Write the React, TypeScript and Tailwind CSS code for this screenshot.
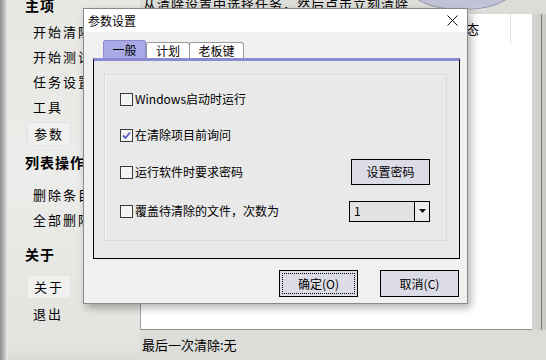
import React from 'react';

const sideItems: { label: string; head?: boolean; mt: number; box?: boolean }[] = [
  { label: '主项', head: true, mt: 0 },
  { label: '开始清除', mt: 2 },
  { label: '开始测试', mt: 0 },
  { label: '任务设置', mt: 0 },
  { label: '工具', mt: 0 },
  { label: '参数', mt: 2, box: true },
  { label: '列表操作', head: true, mt: 4 },
  { label: '删除条目', mt: 8 },
  { label: '全部删除', mt: 0 },
  { label: '关于', head: true, mt: 10 },
  { label: '关于', mt: 8, box: true },
  { label: '退出', mt: 2 },
];

function Check({ checked }: { checked?: boolean }) {
  return (
    <span className="w-[13px] h-[13px] border border-[#3a3a3a] bg-[#f4f4f4] flex items-center justify-center shrink-0">
      {checked && (
        <svg width="9" height="9" viewBox="0 0 9 9">
          <path d="M1 4.5 L3.5 7 L8 1.5" fill="none" stroke="#5a5ac8" strokeWidth="1.8" />
        </svg>
      )}
    </span>
  );
}

function Btn({ label, focus }: { label: string; focus?: boolean }) {
  return (
    <div className="w-[79px] h-[27px] border border-black bg-[#dcdce6] p-[2px]">
      <div
        className={`w-full h-full flex items-center justify-center text-[12px] ${
          focus ? 'border border-dotted border-black' : ''
        }`}
      >
        {label}
      </div>
    </div>
  );
}

export default function App() {
  return (
    <div className="relative w-[546px] h-[360px] overflow-hidden flex bg-[#dcdcd8] text-black font-['Noto_Sans_CJK_SC',sans-serif]">
      {/* left frame strip */}
      <div className="w-[8px] h-full bg-gradient-to-r from-[#8e8e8e] via-[#b8b8b8] to-[#f2f2f2]" />

      {/* sidebar */}
      <div className="w-[132px] h-full bg-gradient-to-b from-[#e6e6e2] via-[#ececea] to-[#e2e2de] flex flex-col mt-[-7px]">
        {sideItems.map((it, i) =>
          it.head ? (
            <div
              key={i}
              className="h-[24px] flex items-center pl-[17px] text-[14px] font-bold tracking-[1px]"
              style={{ marginTop: it.mt }}
            >
              {it.label}
            </div>
          ) : (
            <div key={i} className="h-[25px] flex items-center pl-[19px]" style={{ marginTop: it.mt }}>
              <span
                className={`h-[24px] flex items-center px-[6px] text-[13px] tracking-[2px] ${
                  it.box ? 'bg-[#f0f0ee] border border-[#e4e4e2]' : ''
                }`}
              >
                {it.label}
              </span>
            </div>
          )
        )}
      </div>

      {/* main area */}
      <div className="flex-1 h-full flex flex-col">
        <div className="h-[14px] flex items-end pl-[3px] overflow-hidden">
          <span className="text-[13px] tracking-[1px] leading-[14px] mb-[3px] whitespace-nowrap">
            从清除设置中选择任务，然后点击立刻清除
          </span>
        </div>
        <div className="flex h-[316px]">
          <div className="w-[392px] h-full bg-white border-l border-[#a0a0a0] border-b border-b-[#909090]">
            <div className="h-[30px] flex">
              <div className="w-[370px] flex items-center pl-[312px] text-[13px] border-r border-[#e4e4e4]">
                状态
              </div>
            </div>
          </div>
          <div className="flex-1 h-full bg-gradient-to-r from-[#d6d6d2] to-[#c8c8c4] flex">
            <div className="w-[9px]" />
            <div className="w-[1px] h-full bg-[#7c7c7c]" />
          </div>
        </div>
        <div className="flex-1 flex items-center pl-[2px] text-[13px]">最后一次清除:无</div>
      </div>

      {/* decorative ellipse top right */}
      <div className="absolute left-[412px] top-[-28px] w-[100px] h-[38px] rounded-[50%] bg-gradient-to-b from-[#a8a8c4] to-[#c8c8dc] border border-[#9090a8]" />

      {/* dialog */}
      <div className="absolute left-[83px] top-[8px] w-[385px] h-[296px] border border-[#8a8a8a] bg-[#f0f0f0] shadow-[3px_4px_8px_rgba(0,0,0,0.3)] flex flex-col">
        <div className="h-[23px] bg-white flex items-center justify-between pl-[4px] pr-[9px] text-[12px]">
          <span>参数设置</span>
          <svg width="11" height="11" viewBox="0 0 11 11">
            <path d="M0.5 0.5 L10.5 10.5 M10.5 0.5 L0.5 10.5" stroke="#111" strokeWidth="1" />
          </svg>
        </div>
        <div className="flex flex-col pl-[9px] pt-[8px]">
          <div className="h-[18px] flex items-end pl-[10px]">
            <div className="w-[43px] h-[18px] bg-[#a9a9e6] border border-b-0 border-[#8a8ad0] rounded-t-[3px] flex items-center justify-center text-[12px]">
              一般
            </div>
            <div className="w-[44px] h-[16px] bg-white border border-b-0 border-[#9a9a9a] rounded-t-[3px] flex items-center justify-center text-[12px]">
              计划
            </div>
            <div className="w-[55px] h-[16px] ml-[-1px] bg-white border border-b-0 border-[#9a9a9a] rounded-t-[3px] flex items-center justify-center text-[12px]">
              老板键
            </div>
          </div>
          <div className="w-[367px] h-[201px] border border-black border-t-[3px] border-t-[#8a8ad2] bg-[#e9e9e9] pt-[13px] pl-[10px] pr-[12px] pb-[17px]">
            <div className="h-full border border-[#dadada] shadow-[inset_1px_1px_0_#f6f6f6] flex flex-col text-[12px]">
              <div className="h-[24px] mt-[12px] flex items-center pl-[15px] gap-[2px]">
                <Check />
                <span>Windows启动时运行</span>
              </div>
              <div className="h-[24px] mt-[12px] flex items-center pl-[15px] gap-[2px]">
                <Check checked />
                <span>在清除项目前询问</span>
              </div>
              <div className="h-[24px] mt-[13px] flex items-center justify-between pl-[15px] pr-[16px]">
                <div className="flex items-center gap-[2px]">
                  <Check />
                  <span>运行软件时要求密码</span>
                </div>
                <div className="w-[79px] h-[26px] border border-black bg-[#dcdce6] flex items-center justify-center text-[12px]">
                  设置密码
                </div>
              </div>
              <div className="h-[24px] mt-[15px] flex items-center justify-between pl-[15px] pr-[16px]">
                <div className="flex items-center gap-[2px]">
                  <Check />
                  <span>覆盖待清除的文件，次数为</span>
                </div>
                <div className="w-[81px] h-[21px] border border-black bg-[#e2e2e2] flex">
                  <span className="flex-1 flex items-center pl-[4px] text-[12px]">1</span>
                  <span className="w-[15px] h-full border-l border-black bg-[#ececec] flex items-center justify-center">
                    <svg width="7" height="4" viewBox="0 0 7 4">
                      <path d="M0 0 L7 0 L3.5 4 Z" fill="#111" />
                    </svg>
                  </span>
                </div>
              </div>
            </div>
          </div>
          <div className="mt-[11px] flex justify-end gap-[22px] pr-[8px]">
            <Btn label="确定(O)" focus />
            <Btn label="取消(C)" />
          </div>
        </div>
      </div>
    </div>
  );
}
